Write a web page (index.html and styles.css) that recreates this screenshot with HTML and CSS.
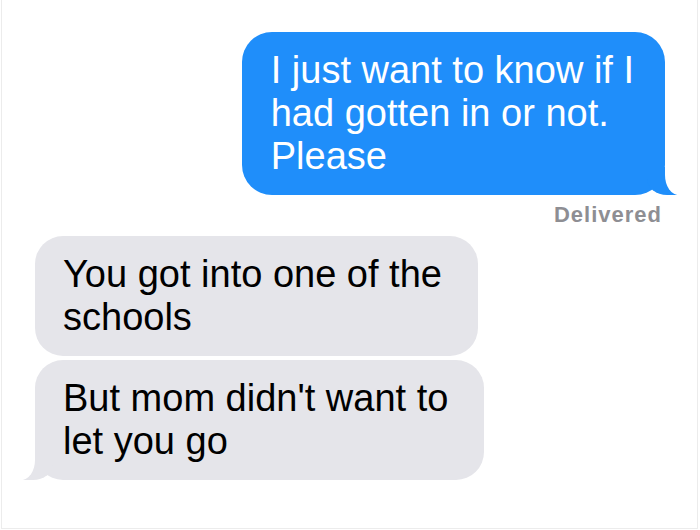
FILE: index.html
```html
<!doctype html>
<html lang="en">
<head>
  <meta charset="UTF-8">
  <meta name="viewport" content="width=device-width, initial-scale=1.0">
  <title>Messages</title>
  <link rel="stylesheet" href="styles.css">
</head>
<body>
  <div class="screen">
    <div class="thread">
      <div class="bubble out tail">I just want to know if I<br>had gotten in or not.<br>Please</div>
      <div class="status">Delivered</div>

      <div class="bubble in first">You got into one of the<br>schools</div>
      <div class="bubble in tail">But mom didn't want to<br>let you go</div>
    </div>
  </div>
</body>
</html>
```

FILE: styles.css
```css
html, body{
  margin:0;
  padding:0;
  background:#fff;
}
.screen {
  margin-left:1px;
  width:697px;
  height:529px;
  box-sizing:border-box;
  border:1px solid #ececec;
  border-top:none;
  overflow:hidden;
}
.thread {
  display:flex;
  flex-direction:column;
  padding:32px 32px 0 33px;
  font-family:"Liberation Sans", Arial, sans-serif;
}
.bubble {
  position:relative;
  padding:17px 36px 17px 29px;
  font-size:38px;
  line-height:43px;
  border-radius:30px;
}
.out {
  align-self:flex-end;
  background:#1f8efa;
  color:#fff;
  padding-right:31px;
}
.in {
  align-self:flex-start;
  background:#e5e5ea;
  color:#000;
  padding-left:28px;
  border-radius:28px;
}
.in.first {
  margin-bottom:4px;
}

/* tails */
.out.tail::before,
.out.tail::after,
.in.tail::before,
.in.tail::after {
  content:"";
  position:absolute;
  bottom:0;
  height:28px;
}
.out.tail::before {
  right:-12px;
  width:30px;
  background:#1f8efa;
  border-bottom-left-radius:20px 16px;
}
.out.tail::after {
  right:-24px;
  width:24px;
  background:#fff;
  border-bottom-left-radius:14px 20px;
}
.in.tail::before {
  left:-12px;
  width:30px;
  background:#e5e5ea;
  border-bottom-right-radius:20px 16px;
}
.in.tail::after {
  left:-24px;
  width:24px;
  background:#fff;
  border-bottom-right-radius:14px 20px;
}

.status {
  align-self:flex-end;
  margin:7px 3px 8px 0;
  font-size:22px;
  line-height:26px;
  font-weight:bold;
  letter-spacing:1px;
  color:#8e8e93;
}
```
